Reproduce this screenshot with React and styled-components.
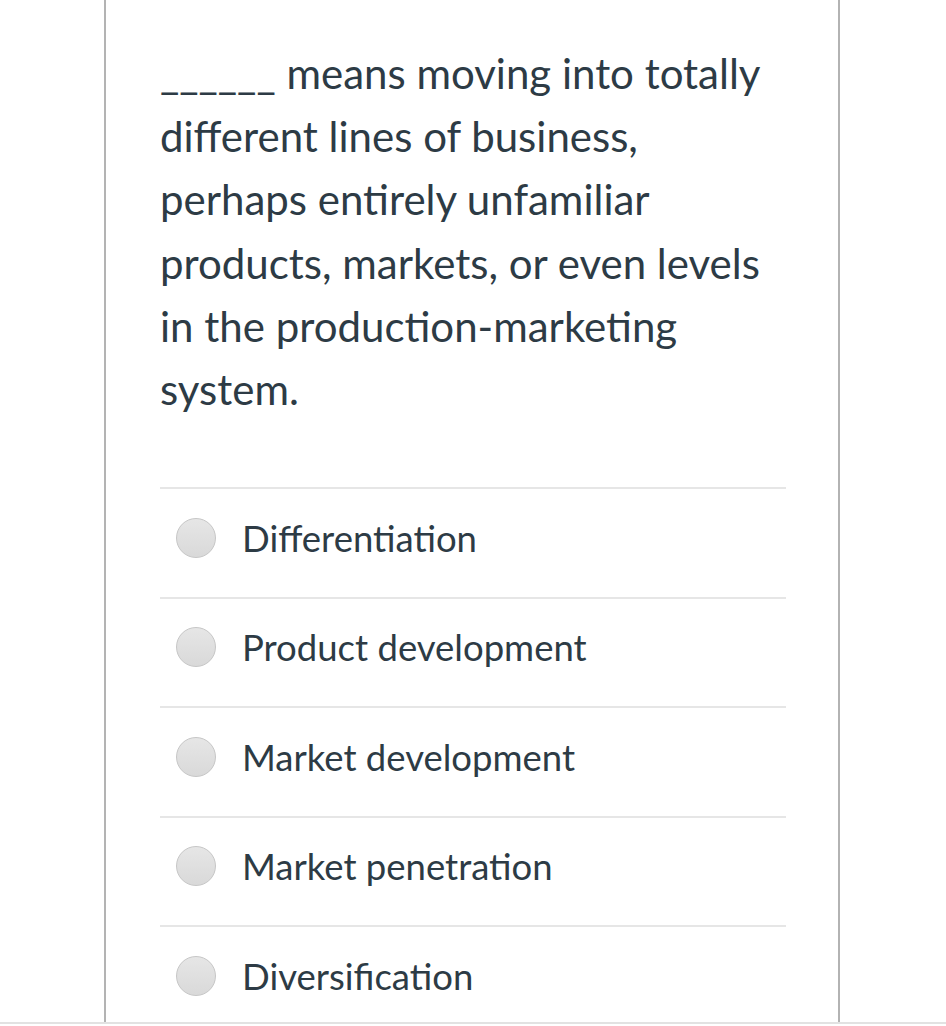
import React from 'react';
import styled, { createGlobalStyle } from 'styled-components';

const GlobalStyle = createGlobalStyle`
  html, body {
    margin: 0;
    padding: 0;
    background: #ffffff;
  }
  body {
    font-family: Lato, "Liberation Sans", sans-serif;
    color: #2d3b45;
  }
`;

const options = [
  'Differentiation',
  'Product development',
  'Market development',
  'Market penetration',
  'Diversification',
];

const App = () => {
  return (
    <>
      <GlobalStyle />
      <Page>
        <Sheet>
          <Question>
            ______ means moving into totally different lines of business,
            perhaps entirely unfamiliar products, markets, or even levels in
            the production-marketing system.
          </Question>
          <Answers>
            {options.map((label) => (
              <Answer key={label}>
                <Radio />
                <AnswerText>{label}</AnswerText>
              </Answer>
            ))}
          </Answers>
        </Sheet>
      </Page>
    </>
  );
};

export default App;

const Page = styled.div`
  width: 946px;
  height: 1024px;
  border-bottom: 2px solid #e2e2e2;
  overflow: hidden;
  box-sizing: border-box;
`;

const Sheet = styled.div`
  margin-left: 104px;
  width: 736px;
  height: 100%;
  box-sizing: border-box;
  border-left: 2px solid #b3b3b3;
  border-right: 2px solid #b3b3b3;
  padding: 42px 52px 0 54px;
`;

const Question = styled.p`
  margin: 0;
  font-size: 42px;
  line-height: 63.2px;
  color: #2d3b45;
`;

const Answers = styled.div`
  margin-top: 66px;
`;

const Answer = styled.div`
  display: flex;
  align-items: center;
  height: 109.5px;
  box-sizing: border-box;
  border-top: 2px solid #e6e6e6;
  padding: 0 0 10px 16px;
`;

const Radio = styled.span`
  flex: none;
  width: 40px;
  height: 40px;
  border-radius: 50%;
  box-sizing: border-box;
  border: 1.5px solid #c6c6c6;
  background: linear-gradient(#e6e6e6, #d9d9d9);
`;

const AnswerText = styled.span`
  margin-left: 26px;
  font-size: 36.5px;
  color: #2d3b45;
`;
